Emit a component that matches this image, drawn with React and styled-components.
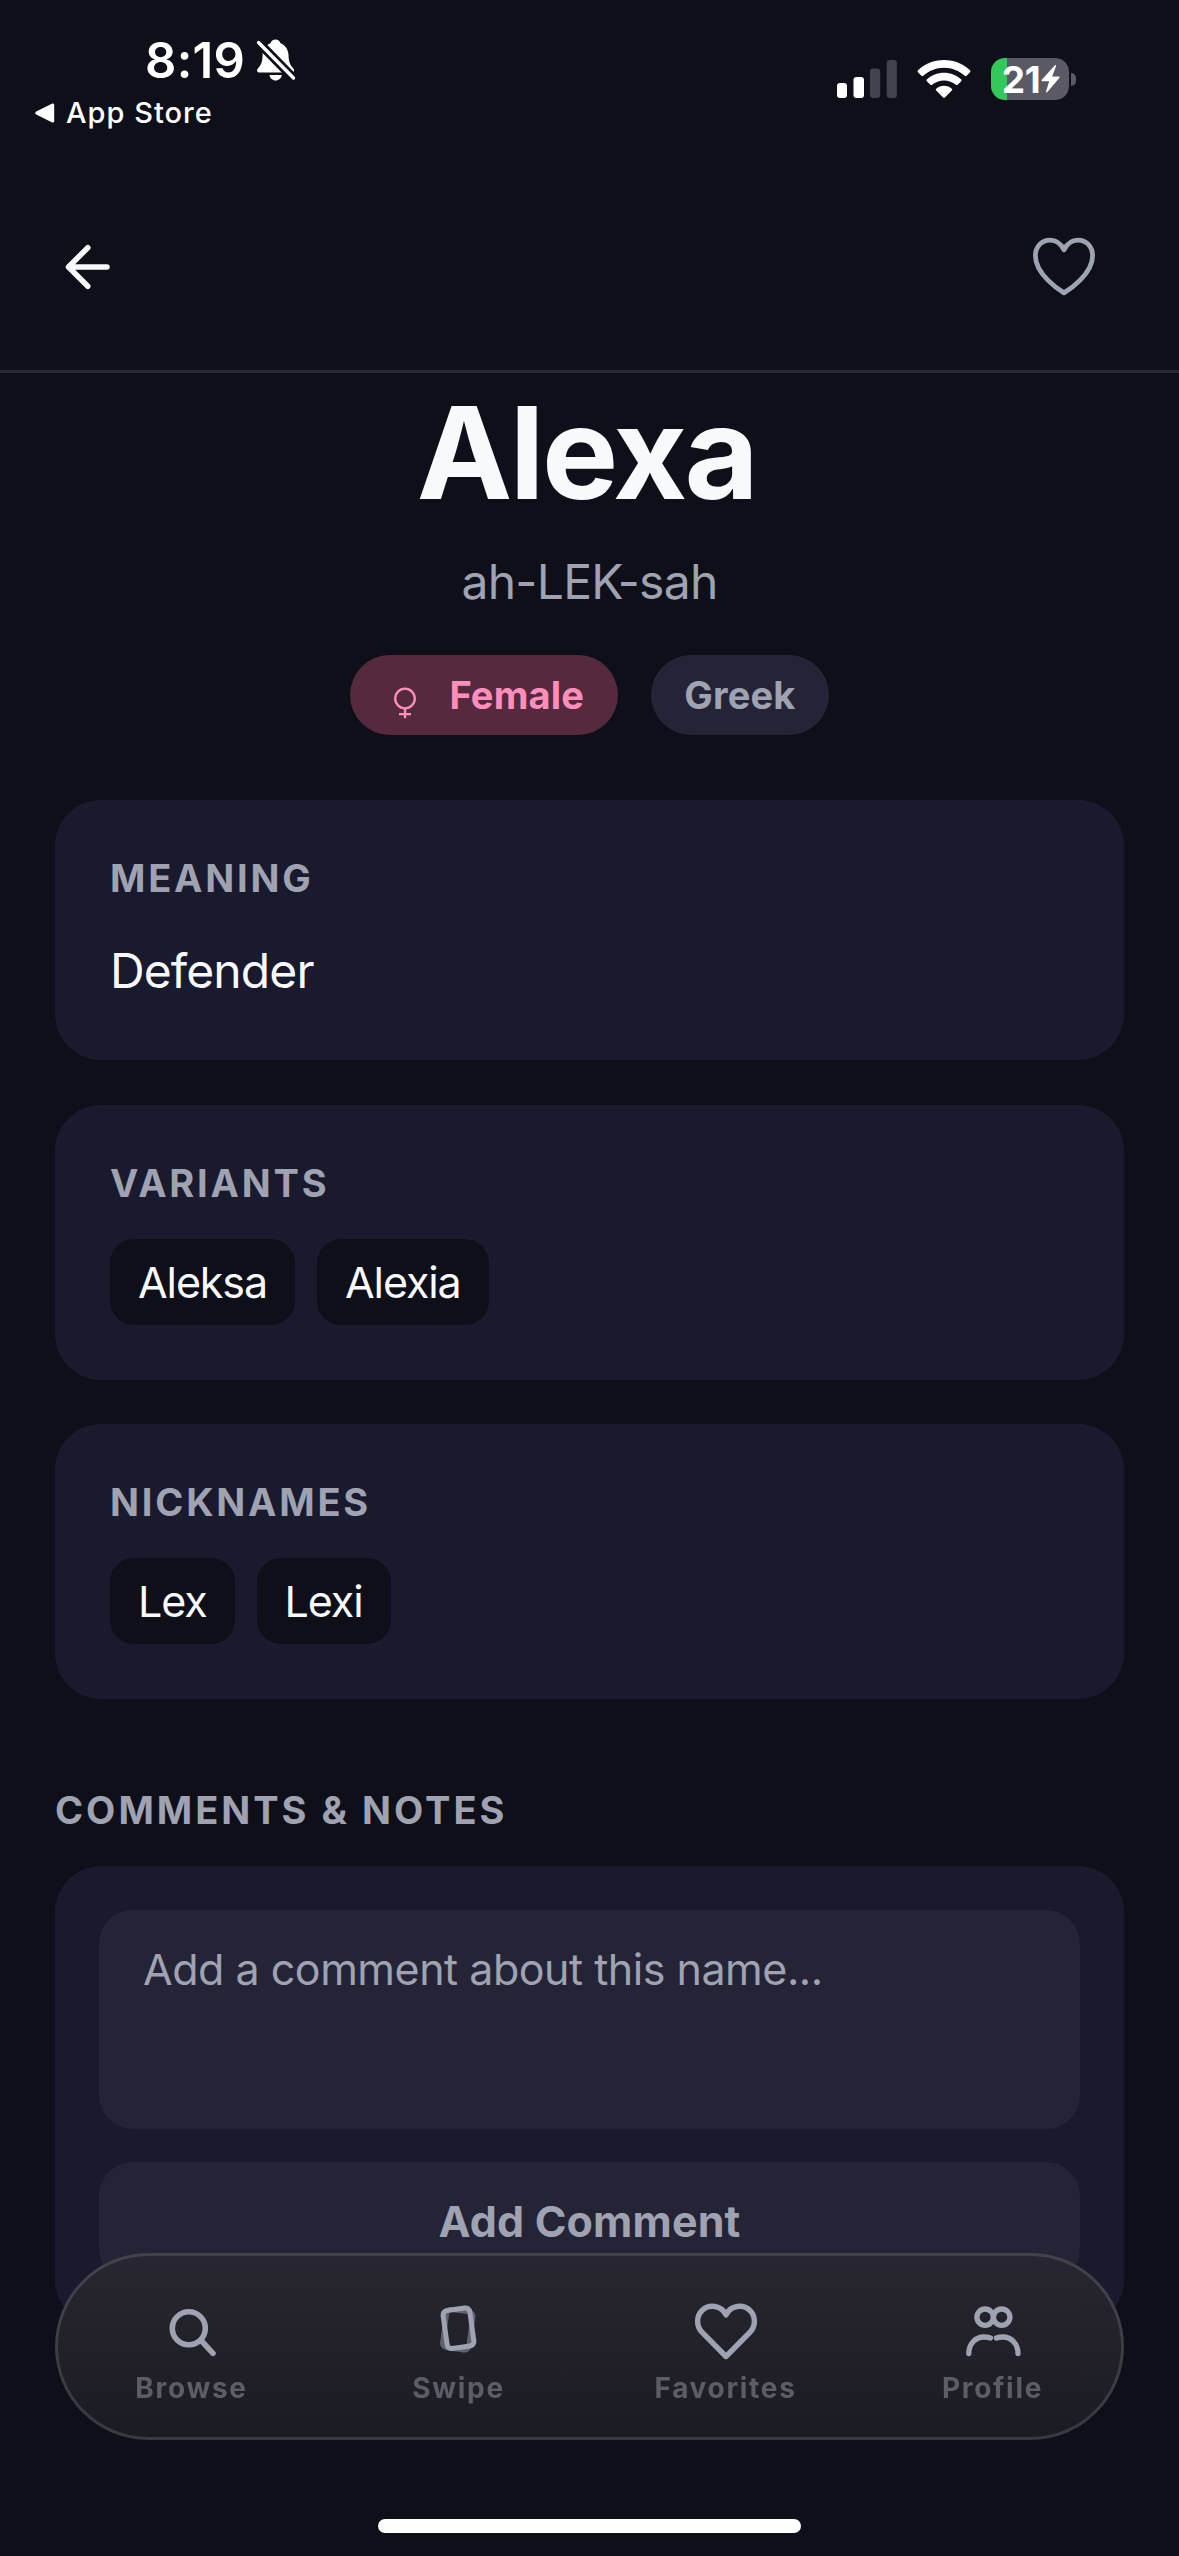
import React from 'react'
import styled, { createGlobalStyle } from 'styled-components'

const variants = ['Aleksa', 'Alexia']
const nicknames = ['Lex', 'Lexi']

const tabs = [
  { id: 1, text: 'Browse', icon: <BrowseIcon /> },
  { id: 2, text: 'Swipe', icon: <SwipeIcon /> },
  { id: 3, text: 'Favorites', icon: <FavoritesIcon /> },
  { id: 4, text: 'Profile', icon: <ProfileIcon /> },
]

function BellOffIcon() {
  return (
    <svg width='40' height='44' viewBox='0 0 40 44' fill='#fff'>
      <path d='M19.5 1.5c2.4 0 4.4 1.5 5 3.7 5 2 7.800 6.300 8 11.800.2 6.500 1.300 9.800 4.800 13.500 1.600 1.700.8 4-1.500 4H4c-3 0-3.800-2.300-2.100-4.100 3.600-3.800 4.500-6.900 4.700-13.400.2-5.500 2.900-9.800 7.900-11.800.6-2.200 2.600-3.700 5-3.700z' />
      <path d='M13.500 37h12.200c-.4 3.200-3 5.500-6.100 5.500s-5.700-2.300-6.100-5.500z' />
      <path d='M2.500 4.500L37.500 40' stroke='#0f0f1a' strokeWidth='9' />
      <path d='M2.500 4.500L37.500 40' stroke='#fff' strokeWidth='3.400' strokeLinecap='round' />
    </svg>
  )
}

function SignalIcon() {
  return (
    <svg width='60' height='40' viewBox='0 0 60 40' fill='#fff'>
      <rect x='0' y='24' width='10' height='15' rx='3' />
      <rect x='16.500' y='18' width='10.500' height='21' rx='3' />
      <rect x='33' y='9.500' width='10.200' height='29.500' rx='3' fill='#42414d' />
      <rect x='49.700' y='1' width='10.200' height='38' rx='3' fill='#42414d' />
    </svg>
  )
}

function WifiIcon() {
  return (
    <svg width='54' height='40' viewBox='0 0 54 40' fill='#fff'>
      <path d='M27 1C37.200 1 46.500 4.900 53 11.300c.6.6.6 1.400 0 2l-3.400 3.500c-.5.5-1.300.5-1.900 0C42.300 11.700 35 8.700 27 8.700S11.700 11.700 6.300 16.800c-.6.5-1.400.5-1.900 0L1 13.300c-.6-.6-.6-1.400 0-2C7.500 4.900 16.800 1 27 1z' />
      <path d='M27 13.700c6.600 0 12.600 2.500 17.100 6.600.6.6.6 1.400.1 2l-3.500 3.500c-.5.5-1.300.5-1.900 0-3.100-2.700-7.300-4.400-11.800-4.400s-8.700 1.700-11.800 4.400c-.6.5-1.400.5-1.900 0l-3.500-3.500c-.5-.6-.5-1.400.1-2 4.500-4.100 10.500-6.600 17.100-6.600z' />
      <path d='M27 26.700c3 0 5.700 1.100 7.800 3 .6.5.6 1.300 0 1.900l-6.900 6.900c-.5.5-1.300.5-1.800 0l-6.900-6.900c-.6-.6-.6-1.400 0-1.900 2.100-1.900 4.800-3 7.800-3z' />
    </svg>
  )
}

function BoltIcon() {
  return (
    <svg width='19' height='28' viewBox='0 0 19 28' fill='#fff'>
      <path d='M13.700.4L.8 14.800c-.7.8-.3 1.400.6 1.400h6.800L5 26.400c-.3 1.100.7 1.500 1.400.7L18.300 12.900c.7-.8.3-1.500-.6-1.500h-6.600L15 1.200c.4-1-.6-1.600-1.300-.8z' />
    </svg>
  )
}

function BackIcon() {
  return (
    <svg width='46' height='46' viewBox='0 0 46 46' fill='none' stroke='#f8f9fc' strokeWidth='5.500' strokeLinecap='round' strokeLinejoin='round'>
      <path d='M22.800 3.700L3.500 23l19.300 19.300M3.500 23H42' />
    </svg>
  )
}

function HeartIcon() {
  return (
    <svg width='64' height='60' viewBox='0 0 64 60' fill='none' stroke='#9fa2b1' strokeWidth='4.800' strokeLinecap='round' strokeLinejoin='round'>
      <path d='M32 55.800C27 52.900 3.400 37.300 3.400 18.800 3.400 9.300 10 3.200 18 3.200c6.200 0 10.900 3.600 14 9.600 3.100-6 7.800-9.600 14-9.600 8 0 14.600 6.100 14.600 15.600C60.600 37.300 37 52.900 32 55.800z' />
    </svg>
  )
}

function FemaleIcon() {
  return (
    <svg width='24' height='32' viewBox='0 0 24 32' fill='none' stroke='#ff8fba' strokeWidth='2.300'>
      <circle cx='12' cy='11.500' r='9.800' />
      <path d='M12 21.300v9.900M6 27.200h12' />
    </svg>
  )
}

function BrowseIcon() {
  return (
    <svg width='66' height='60' viewBox='0 0 66 60' fill='none' stroke='#9fa2b1' strokeWidth='5.600' strokeLinecap='round'>
      <circle cx='29.800' cy='28.300' r='16.500' />
      <path d='M43.500 42l10.500 11.300' />
    </svg>
  )
}

function SwipeIcon() {
  return (
    <svg width='66' height='60' viewBox='0 0 66 60' fill='none' stroke='#9fa2b1' strokeWidth='5'>
      <rect x='18.500' y='10.500' width='26.500' height='38.500' rx='4.500' transform='rotate(8 31.800 29.800)' opacity='.5' />
      <rect x='19' y='9' width='27' height='38.500' rx='4.500' transform='rotate(-8 32.500 28.300)' />
    </svg>
  )
}

function FavoritesIcon() {
  return (
    <svg width='66' height='60' viewBox='0 0 66 60' fill='none' stroke='#9fa2b1' strokeWidth='5.400' strokeLinecap='round' strokeLinejoin='round'>
      <path d='M33 56.500L8.700 31.800C3 25.800 3.400 16 9 10.500c6.700-6.500 19.500-5.600 24 4.500 4.500-10.100 17.300-11 24-4.500C62.600 16 63 25.800 57.300 31.800L33 56.500z' />
    </svg>
  )
}

function ProfileIcon() {
  return (
    <svg width='66' height='60' viewBox='0 0 66 60' fill='none' stroke='#9fa2b1' strokeWidth='5.300' strokeLinecap='round'>
      <circle cx='25.100' cy='17.200' r='8.200' />
      <circle cx='41.700' cy='17.200' r='8.200' />
      <path d='M8.800 53.500c0-9.500 6.500-16.500 15-16.500 2.500 0 4.800.3 6.600 1' />
      <path d='M58 53.500c0-9.500-6.500-16.500-15-16.500-2.500 0-4.800.3-6.600 1' />
    </svg>
  )
}

const NameCard = ({ title, names }) => {
  return (
    <Card>
      <CardLabel>{title}</CardLabel>
      <ChipRow>
        {names.map((name) => (
          <Chip key={name}>{name}</Chip>
        ))}
      </ChipRow>
    </Card>
  )
}

const App = () => {
  return (
    <Screen>
      <GlobalStyle />
      <StatusBar>
        <div>
          <TimeRow>
            <Time>8:19</Time>
            <BellOffIcon />
          </TimeRow>
          <ReturnLink>
            <svg width='20' height='20' viewBox='0 0 20 20' fill='#fff'>
              <path d='M1.200 8.600L16.800.7c1.200-.6 2.400.1 2.400 1.400v15.800c0 1.300-1.200 2-2.400 1.400L1.200 11.400c-1.200-.6-1.200-2.200 0-2.800z' />
            </svg>
            App Store
          </ReturnLink>
        </div>
        <StatusIcons>
          <SignalIcon />
          <WifiIcon />
          <Battery>
            <BatteryBody>
              21
              <BoltIcon />
            </BatteryBody>
            <BatteryTip />
          </Battery>
        </StatusIcons>
      </StatusBar>

      <Header>
        <IconButton type='button' aria-label='Back'>
          <BackIcon />
        </IconButton>
        <IconButton type='button' aria-label='Favorite'>
          <HeartIcon />
        </IconButton>
      </Header>

      <Content>
        <Name>Alexa</Name>
        <Pronunciation>ah-LEK-sah</Pronunciation>
        <Badges>
          <Badge $female>
            <FemaleIcon />
            Female
          </Badge>
          <Badge>Greek</Badge>
        </Badges>

        <CardList>
          <Card>
            <CardLabel>MEANING</CardLabel>
            <Meaning>Defender</Meaning>
          </Card>
          <NameCard title='VARIANTS' names={variants} />
          <NameCard title='NICKNAMES' names={nicknames} />
        </CardList>

        <SectionTitle>COMMENTS &amp; NOTES</SectionTitle>
        <CommentCard>
          <CommentInput placeholder='Add a comment about this name...' />
          <CommentButton type='button'>Add Comment</CommentButton>
        </CommentCard>
      </Content>

      <TabBar>
        {tabs.map(({ id, text, icon }) => (
          <Tab key={id}>
            {icon}
            <TabLabel>{text}</TabLabel>
          </Tab>
        ))}
      </TabBar>
      <HomeIndicator />
    </Screen>
  )
}

const GlobalStyle = createGlobalStyle`
  * {
    box-sizing: border-box;
    margin: 0;
    padding: 0;
  }
  body {
    background: #0f0f1a;
    font-family: Inter, 'Liberation Sans', sans-serif;
  }
  svg {
    display: block;
    flex-shrink: 0;
  }
`

const Screen = styled.div`
  width: 1179px;
  height: 2556px;
  overflow: hidden;
  background: #0f0f1a;
  color: #f8f9fc;
`

const StatusBar = styled.div`
  height: 160px;
  display: flex;
  justify-content: space-between;
  padding: 30px 103px 0 35px;
  color: #fff;
`

const TimeRow = styled.div`
  height: 60px;
  display: flex;
  align-items: center;
  gap: 11px;
  padding-left: 110px;
`

const Time = styled.span`
  font-size: 49px;
  font-weight: 600;
  letter-spacing: 0.3px;
`

const ReturnLink = styled.div`
  display: flex;
  align-items: center;
  gap: 11px;
  line-height: 45px;
  font-size: 29px;
  font-weight: 500;
  letter-spacing: 1px;
`

const StatusIcons = styled.div`
  height: 98px;
  display: flex;
  align-items: center;
  gap: 20px;
`

const Battery = styled.div`
  display: flex;
  align-items: center;
  gap: 2px;
`

const BatteryBody = styled.div`
  width: 78px;
  height: 42px;
  display: flex;
  align-items: center;
  justify-content: center;
  gap: 1px;
  padding-left: 2px;
  border-radius: 14px;
  background: linear-gradient(to right, #34c759 16px, #5b5a64 16px);
  font-size: 37px;
  font-weight: 700;
  letter-spacing: -0.5px;
`

const BatteryTip = styled.div`
  width: 5px;
  height: 13px;
  border-radius: 0 6px 6px 0;
  background: #5b5a64;
`

const Header = styled.header`
  height: 213px;
  display: flex;
  align-items: center;
  justify-content: space-between;
  padding: 4px 83px 0 65px;
  border-bottom: 3px solid #292836;
`

const IconButton = styled.button`
  border: none;
  background: transparent;
`

const Content = styled.main`
  padding: 5px 55px 0;
`

const Name = styled.h1`
  padding-right: 6px;
  line-height: 149px;
  font-size: 128px;
  font-weight: 700;
  letter-spacing: -2.6px;
  text-align: center;
`

const Pronunciation = styled.p`
  margin-top: 25px;
  line-height: 60px;
  font-size: 48px;
  letter-spacing: -0.7px;
  text-align: center;
  color: #9fa2b1;
`

const Badges = styled.div`
  display: flex;
  justify-content: center;
  gap: 33px;
  margin-top: 43px;
`

const Badge = styled.span`
  height: 80px;
  display: flex;
  align-items: center;
  gap: 32px;
  padding: 0 ${({ $female }) => ($female ? '34px 0 43px' : '33px')};
  border-radius: 40px;
  background: ${({ $female }) => ($female ? '#552a3f' : '#252437')};
  color: ${({ $female }) => ($female ? '#ff8fba' : '#9fa2b1')};
  font-size: 38px;
  font-weight: 700;
  letter-spacing: 0.2px;
  svg {
    margin-top: 16px;
  }
`

const CardList = styled.div`
  display: grid;
  gap: 44.5px;
  margin-top: 65px;
`

const Card = styled.section`
  padding: 54px 55px 55px;
  border-radius: 46px;
  background: #1a1a2e;
`

const CardLabel = styled.h2`
  line-height: 48px;
  font-size: 38px;
  font-weight: 700;
  letter-spacing: 2.8px;
  color: #9fa2b1;
`

const Meaning = styled.p`
  margin: 32px 0 -3px;
  line-height: 74px;
  font-size: 48px;
  letter-spacing: -0.9px;
`

const ChipRow = styled.div`
  display: flex;
  gap: 22px;
  margin-top: 32px;
`

const Chip = styled.span`
  padding: 0 28px;
  line-height: 86px;
  border-radius: 24px;
  background: #0f0f1a;
  font-size: 43px;
  letter-spacing: -1.1px;
`

const SectionTitle = styled(CardLabel)`
  margin: 87px 0 32px;
  letter-spacing: 3px;
`

const CommentCard = styled.section`
  display: grid;
  gap: 33px;
  padding: 44px;
  border-radius: 46px;
  background: #1a1a2e;
`

const CommentInput = styled.textarea`
  height: 219px;
  padding: 33px 44px;
  border: none;
  border-radius: 34px;
  background: #252436;
  resize: none;
  font: 400 43px/52px Inter, sans-serif;
  letter-spacing: -0.48px;
  &::placeholder {
    color: #9fa2b1;
  }
`

const CommentButton = styled.button`
  height: 120px;
  padding-bottom: 2px;
  border: none;
  border-radius: 34px;
  background: #252436;
  color: #9fa2b1;
  font: 700 43px/52px Inter, sans-serif;
  letter-spacing: 0.15px;
`

const TabBar = styled.nav`
  position: fixed;
  top: 2253px;
  left: 55px;
  width: 1069px;
  height: 187px;
  display: grid;
  grid-template-columns: repeat(4, 267px);
  border: 3px solid rgba(255, 255, 255, 0.13);
  border-radius: 94px;
  background: linear-gradient(#282731, #1b1b23) border-box;
`

const Tab = styled.div`
  display: flex;
  flex-direction: column;
  align-items: center;
  padding-top: 44px;
`

const TabLabel = styled.span`
  margin-top: 11px;
  line-height: 34px;
  font-size: 28px;
  font-weight: 700;
  letter-spacing: 1.7px;
  color: #5d5d68;
`

const HomeIndicator = styled.div`
  position: fixed;
  top: 2519px;
  left: 378px;
  width: 423px;
  height: 14px;
  border-radius: 7px;
  background: #fff;
`

export default App
